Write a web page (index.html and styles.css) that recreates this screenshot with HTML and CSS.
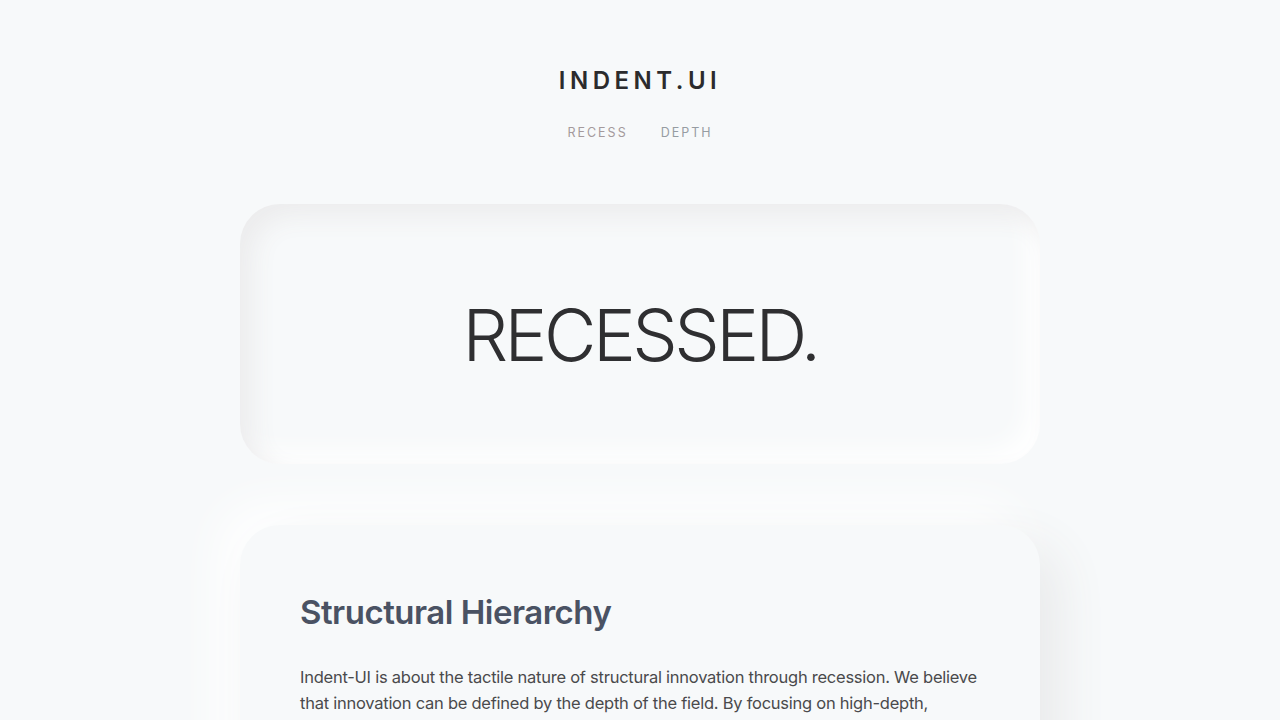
FILE: index.html
```html
<!DOCTYPE html>
<html lang="en">
<head>
<meta charset="utf-8">
<title>Indent.UI</title>
<link rel="stylesheet" href="styles.css">
</head>
<body>
  <header class="site-header">
    <div class="logo">INDENT.UI</div>
    <nav class="nav">
      <a class="nav-link recess" href="#">RECESS</a>
      <a class="nav-link depth" href="#">DEPTH</a>
    </nav>
  </header>
  <main class="main">
    <section class="hero">
      <h1 class="hero-title">RECESSED.</h1>
    </section>
    <section class="card">
      <h2 class="card-title">Structural Hierarchy</h2>
      <p class="card-text">Indent-UI is about the tactile nature of structural innovation through recession. We believe that innovation can be defined by the depth of the field. By focusing on high-depth, recessed surfaces, we create interfaces that feel carved rather than built, guiding the eye through layered structure.</p>
    </section>
  </main>
</body>
</html>
```
FILE: styles.css
```css
* { box-sizing: border-box; }
html, body { margin: 0; padding: 0; }
body {
  background: #f7f9fa;
  font-family: "Inter", "Noto Sans", sans-serif;
  color: #333;
}
.site-header {
  padding-top: 65px;
  display: flex;
  flex-direction: column;
  align-items: center;
}
.logo {
  font-size: 24px;
  line-height: 32px;
  font-weight: 600;
  letter-spacing: 4.5px;
  color: #2b2b2d;
}
.nav {
  margin-top: 28px;
  display: flex;
  gap: 33px;
}
.nav-link {
  font-size: 12.5px;
  line-height: 16px;
  letter-spacing: 2px;
  text-decoration: none;
}
.recess { color: #a49a9c; }
.depth { color: #969ca2; }
.main {
  width: 800px;
  margin: 63px auto 0;
  display: flex;
  flex-direction: column;
  gap: 61px;
}
.hero {
  height: 260px;
  border-radius: 40px;
  background: #f7f9fa;
  box-shadow: inset 12px 12px 26px #ececed, inset -12px -12px 26px #ffffff;
  display: flex;
  align-items: center;
  justify-content: center;
}
.hero-title {
  margin: 0;
  font-size: 72px;
  font-weight: 300;
  letter-spacing: -3.5px;
  color: #2f2f31;
}
.card {
  border-radius: 40px;
  background: #f7f9fa;
  padding: 66px 60px 60px;
  box-shadow: 20px 20px 50px #e9eaeb, -20px -20px 50px #ffffff;
}
.card-title {
  margin: 0 0 31px;
  font-size: 33px;
  line-height: 42px;
  font-weight: 600;
  letter-spacing: -0.5px;
  color: #4a5263;
}
.card-text {
  margin: 0;
  font-size: 16.5px;
  line-height: 26px;
  color: #4a4a4c;
  letter-spacing: -0.25px;
}
```
